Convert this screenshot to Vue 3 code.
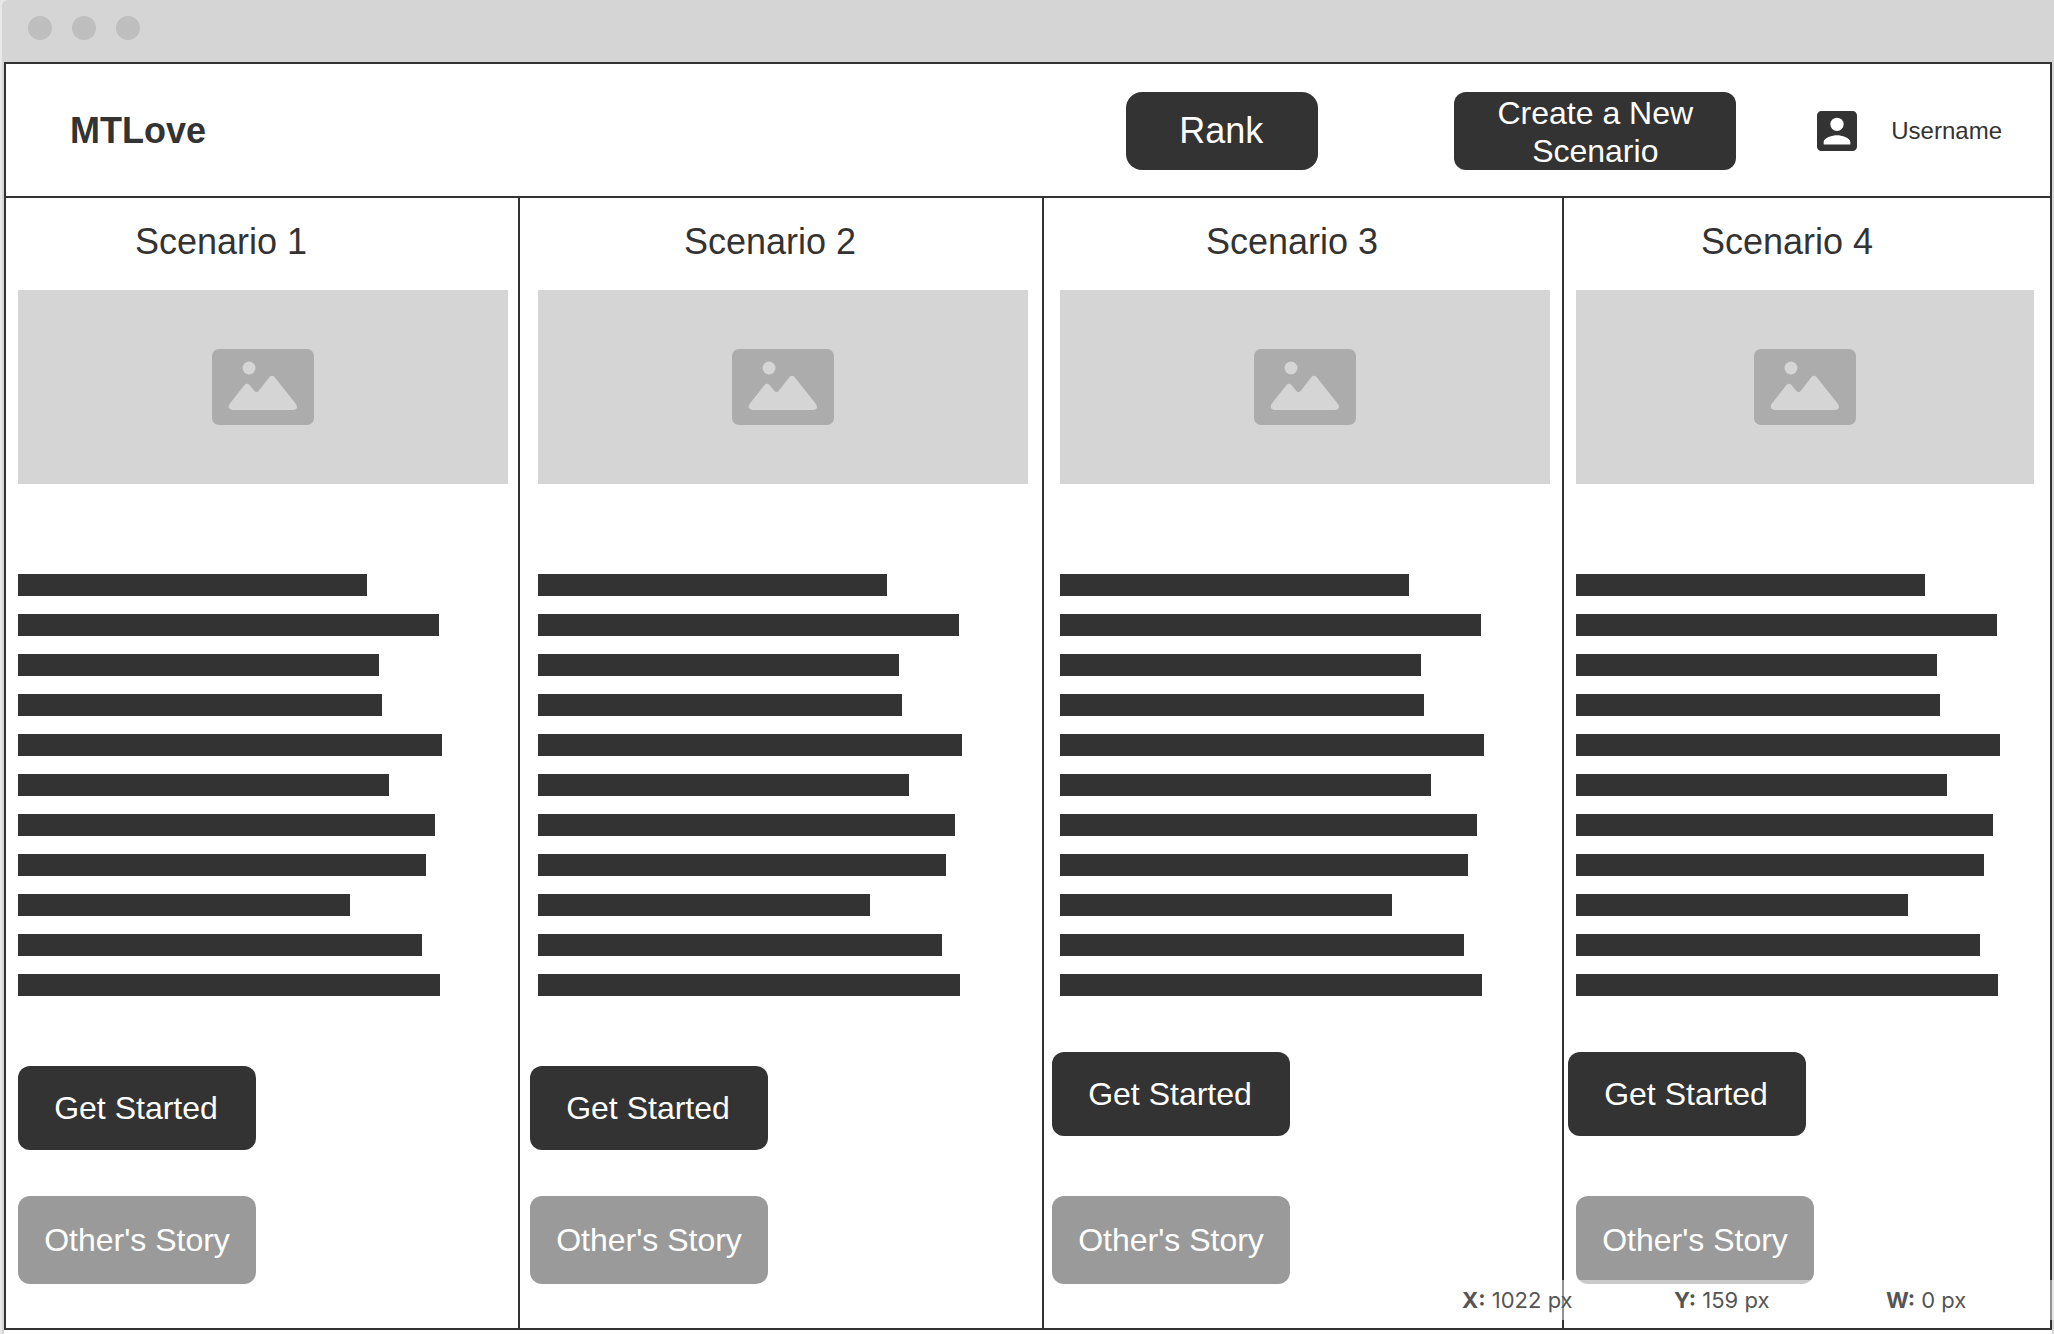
<script setup>
const bars = [349, 421, 361, 364, 424, 371, 417, 408, 332, 404, 422]

const scenarios = [
  { id: 1, title: 'Scenario 1' },
  { id: 2, title: 'Scenario 2' },
  { id: 3, title: 'Scenario 3' },
  { id: 4, title: 'Scenario 4' },
]

const readouts = [
  { key: 'X', value: '1022 px' },
  { key: 'Y', value: '159 px' },
  { key: 'W', value: '0 px' },
]
</script>

<template>
  <div class="window">
    <div class="titlebar">
      <span class="dot"></span>
      <span class="dot"></span>
      <span class="dot"></span>
    </div>

    <div class="frame">
      <header class="header">
        <h1 class="brand">MTLove</h1>
        <button type="button" class="btn rank">Rank</button>
        <button type="button" class="btn create">Create a New Scenario</button>
        <a href="#" class="user">
          <svg class="avatar" viewBox="3 3 18 18" aria-hidden="true">
            <path
              fill="#333"
              fill-rule="evenodd"
              d="M5 3h14a2 2 0 0 1 2 2v14a2 2 0 0 1-2 2H5a2 2 0 0 1-2-2V5a2 2 0 0 1 2-2zM15 9a3 3 0 1 0-6 0 3 3 0 0 0 6 0zM6 17v1.100h12V17c0-2-4-3.100-6-3.100S6 15 6 17z"
            />
          </svg>
          <span>Username</span>
        </a>
      </header>

      <main class="columns">
        <section v-for="s in scenarios" :key="s.id" class="column" :class="'column-' + s.id">
          <h2 class="title">{{ s.title }}</h2>
          <div class="picture">
            <svg class="picture-icon" viewBox="0 0 102 76" aria-hidden="true">
              <rect width="102" height="76" rx="7" fill="#acacac" />
              <circle cx="37" cy="19" r="6.500" fill="#d5d5d5" />
              <path
                fill="#d5d5d5"
                d="M17.500 55 L32.500 36 Q35 33.500 37.500 36 L42 41.500 Q44.500 44.500 47 41.500 L57.500 28 Q60 25.500 62.500 28 L84 55 Q87 60 81.500 61 H20.500 Q15 60 17.500 55z"
              />
            </svg>
          </div>
          <div class="bars">
            <div v-for="(w, i) in bars" :key="i" class="bar" :style="{ width: w + 'px' }"></div>
          </div>
          <div class="actions">
            <button type="button" class="btn start">Get Started</button>
            <button type="button" class="btn story">Other's Story</button>
          </div>
        </section>
      </main>
    </div>

    <div class="status">
      <span v-for="r in readouts" :key="r.key" class="readout"><b>{{ r.key }}:</b> {{ r.value }}</span>
    </div>
  </div>
</template>

<style>
body {
  background: #e8e8e8;
}
</style>

<style scoped>
.window {
  position: relative;
  box-sizing: border-box;
  min-height: 100vh;
  margin-left: 2px;
  padding: 0 2px 4px;
  border-top-left-radius: 6px;
  background: linear-gradient(to right, #d5d5d5 2px, #fff 2px) 0 100% / calc(100% - 2px) 4px no-repeat, #d5d5d5;
  color: #333;
  font-family: "Liberation Sans", Arial, sans-serif;
}

.titlebar {
  display: flex;
  gap: 20px;
  height: 62px;
  padding: 16px 24px 0;
  box-sizing: border-box;
}

.dot {
  width: 24px;
  height: 24px;
  border-radius: 50%;
  background: #bebebe;
}

.frame {
  border: 2px solid #333;
  background: #fff;
}

.header {
  display: flex;
  align-items: center;
  height: 130px;
  padding: 2px 48px 0 64px;
  border-bottom: 2px solid #333;
}

.brand {
  margin: 0 auto 0 0;
  font-size: 36px;
  line-height: 40px;
}

.btn {
  padding: 0 2px 0 0;
  border: 0;
  border-radius: 12px;
  background: #333;
  color: #fff;
  font-family: inherit;
  font-size: 32px;
  line-height: 38px;
}

.rank {
  width: 192px;
  height: 78px;
  margin-right: 136px;
  border-radius: 16px;
  font-size: 36px;
}

.create {
  width: 282px;
  height: 78px;
  padding: 2px 40px 0;
  margin-right: 81px;
}

.user {
  display: flex;
  align-items: center;
  gap: 34px;
  color: inherit;
  font-size: 24px;
  line-height: 28px;
  text-decoration: none;
}

.avatar {
  width: 40px;
  height: 40px;
}

.columns {
  display: grid;
  grid-template-columns: 514fr 524fr 520fr 486fr;
}

.column {
  min-width: 0;
  padding: 0 12px 44px;
  border-right: 2px solid #333;
}

.column-2 {
  padding-right: 14px;
  padding-left: 18px;
}

.column-3 {
  padding-left: 16px;
}

.column-1 {
  padding-right: 10px;
}

.column-4 {
  padding-right: 16px;
  border-right: 0;
}

.title {
  margin: 0;
  padding: 22px 26px 26px 0;
  font-size: 36px;
  font-weight: 400;
  line-height: 44px;
  text-align: center;
}

.column-1 .title {
  padding-right: 84px;
}

.column-4 .title {
  padding-right: 36px;
}

.picture {
  display: flex;
  align-items: center;
  justify-content: center;
  height: 194px;
  background: #d5d5d5;
}

.picture-icon {
  width: 102px;
  height: 76px;
}

.bars {
  display: grid;
  gap: 18px;
  padding: 90px 0 70px;
}

.bar {
  height: 22px;
  background: #333;
}

.actions {
  display: flex;
  flex-direction: column;
  gap: 46px;
}

.start {
  width: 238px;
  height: 84px;
}

.story {
  width: 238px;
  height: 88px;
  padding-right: 0;
  background: #9a9a9a;
}

.column-2 .actions,
.column-3 .actions,
.column-4 .start {
  margin-left: -8px;
}

.column-3 .bars,
.column-4 .bars {
  padding-bottom: 56px;
}

.column-3 .actions,
.column-4 .actions {
  gap: 60px;
}

.status {
  position: absolute;
  right: 0;
  bottom: 14px;
  display: flex;
  height: 40px;
  padding-left: 20px;
  background: rgba(255, 255, 255, 0.47);
  color: #555;
  font-family: Inter, sans-serif;
  font-size: 22px;
  line-height: 40px;
}

.readout {
  width: 212px;
}

.readout:last-child {
  width: 168px;
}
</style>
